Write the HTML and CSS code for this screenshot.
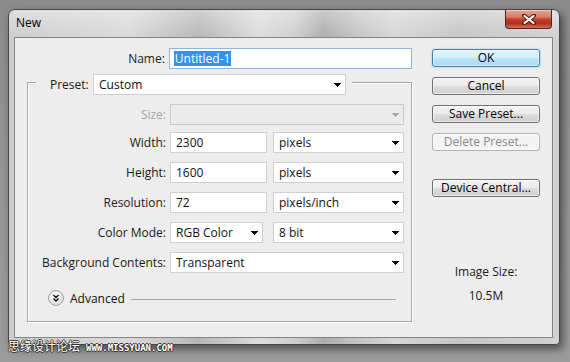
FILE: index.html
```html
<!DOCTYPE html>
<html>

<head>
    <meta charset="utf-8">
    <title>New</title>
    <link rel="stylesheet" href="styles.css">
</head>

<body>
    <div id="screen">
        <div class="window">
            <div class="titlebar">
                <span class="title">New</span>
                <div class="closebtn">
                    <svg width="14" height="11" viewBox="0 0 14 11">
                        <path d="M2 1.5L12 9.5M12 1.5L2 9.5" stroke="#5a1a10" stroke-width="4" stroke-linecap="round" />
                        <path d="M2.5 2L11.5 9M11.5 2L2.5 9" stroke="#fff" stroke-width="2.2" stroke-linecap="round" />
                    </svg>
                </div>
            </div>
            <div class="client">
                <div class="form">
                    <div class="row namerow">
                        <span class="lbl">Name:</span>
                        <div class="field name"><span class="sel">Untitled-1</span></div>
                    </div>

                    <div class="group">
                        <div class="grouphead">
                            <span class="headlbl">Preset:</span>
                            <div class="field drop preset">
                                <span>Custom</span>
                                <svg class="arrow" width="7" height="4"><rect x="0" y="0" width="7" height="1"/><rect x="1" y="1" width="5" height="1"/><rect x="2" y="2" width="3" height="1"/><rect x="3" y="3" width="1" height="1"/></svg>
                            </div>
                        </div>

                        <div class="rows">
                            <div class="row sizerow">
                                <span class="lbl dim">Size:</span>
                                <div class="field drop wide off">
                                    <span></span>
                                    <svg class="arrow" width="7" height="4"><rect x="0" y="0" width="7" height="1"/><rect x="1" y="1" width="5" height="1"/><rect x="2" y="2" width="3" height="1"/><rect x="3" y="3" width="1" height="1"/></svg>
                                </div>
                            </div>
                            <div class="row">
                                <span class="lbl">Width:</span>
                                <div class="field num">2300</div>
                                <div class="field drop unit">
                                    <span>pixels</span>
                                    <svg class="arrow" width="7" height="4"><rect x="0" y="0" width="7" height="1"/><rect x="1" y="1" width="5" height="1"/><rect x="2" y="2" width="3" height="1"/><rect x="3" y="3" width="1" height="1"/></svg>
                                </div>
                            </div>
                            <div class="row">
                                <span class="lbl">Height:</span>
                                <div class="field num">1600</div>
                                <div class="field drop unit">
                                    <span>pixels</span>
                                    <svg class="arrow" width="7" height="4"><rect x="0" y="0" width="7" height="1"/><rect x="1" y="1" width="5" height="1"/><rect x="2" y="2" width="3" height="1"/><rect x="3" y="3" width="1" height="1"/></svg>
                                </div>
                            </div>
                            <div class="row">
                                <span class="lbl">Resolution:</span>
                                <div class="field num">72</div>
                                <div class="field drop unit">
                                    <span>pixels/inch</span>
                                    <svg class="arrow" width="7" height="4"><rect x="0" y="0" width="7" height="1"/><rect x="1" y="1" width="5" height="1"/><rect x="2" y="2" width="3" height="1"/><rect x="3" y="3" width="1" height="1"/></svg>
                                </div>
                            </div>
                            <div class="row">
                                <span class="lbl">Color Mode:</span>
                                <div class="field drop mode">
                                    <span>RGB Color</span>
                                    <svg class="arrow" width="7" height="4"><rect x="0" y="0" width="7" height="1"/><rect x="1" y="1" width="5" height="1"/><rect x="2" y="2" width="3" height="1"/><rect x="3" y="3" width="1" height="1"/></svg>
                                </div>
                                <div class="field drop unit">
                                    <span>8 bit</span>
                                    <svg class="arrow" width="7" height="4"><rect x="0" y="0" width="7" height="1"/><rect x="1" y="1" width="5" height="1"/><rect x="2" y="2" width="3" height="1"/><rect x="3" y="3" width="1" height="1"/></svg>
                                </div>
                            </div>
                            <div class="row">
                                <span class="lbl">Background Contents:</span>
                                <div class="field drop wide">
                                    <span>Transparent</span>
                                    <svg class="arrow" width="7" height="4"><rect x="0" y="0" width="7" height="1"/><rect x="1" y="1" width="5" height="1"/><rect x="2" y="2" width="3" height="1"/><rect x="3" y="3" width="1" height="1"/></svg>
                                </div>
                            </div>
                        </div>

                        <div class="advanced">
                            <svg class="advicon" width="16" height="16" viewBox="0 0 16 16">
                                <defs>
                                    <radialGradient id="ball" cx="0.4" cy="0.35" r="0.7">
                                        <stop offset="0" stop-color="#ffffff" />
                                        <stop offset="1" stop-color="#d6d6d6" />
                                    </radialGradient>
                                </defs>
                                <circle cx="8" cy="8" r="7.5" fill="url(#ball)" stroke="#a4a4a4" />
                                <path d="M5.5 5L8 7.5L10.5 5M5.5 8.5L8 11L10.5 8.5" fill="none" stroke="#111" stroke-width="1.4" />
                            </svg>
                            <span class="advtext">Advanced</span>
                            <div class="advline"></div>
                        </div>
                    </div>
                </div>

                <div class="side">
                    <div class="btn primary">OK</div>
                    <div class="btn">Cancel</div>
                    <div class="btn">Save Preset...</div>
                    <div class="btn disabled">Delete Preset...</div>
                    <div class="btn device">Device Central...</div>
                    <div class="imgsize">
                        <p>Image Size:</p>
                        <p class="mb">10.5M</p>
                    </div>
                </div>
            </div>
        </div>
        <div class="watermark">
            <span class="cn">思缘设计论坛</span>
            <span class="url">WWW.MISSYUAN.COM</span>
        </div>
    </div>
</body>

</html>
```

FILE: styles.css
```css
* {
    box-sizing: border-box;
    margin: 0px;
    padding: 0px;
}

body {
    font-family: "Open Sans", "Noto Sans", sans-serif;
    font-size: 12px;
    color: #1a1a1a;
    background: #8f8f8f;
}

#screen {
    width: 570px;
    height: 362px;
    position: relative;
    overflow: hidden;
    padding: 9px 0px 0px 8px;
    background: linear-gradient(180deg, #8c8c8c 0%, #979797 60%, #9c9c9c 100%);
}

.window {
    width: 552px;
    height: 336px;
    border: 1px solid #474747;
    border-radius: 7px 7px 4px 4px;
    padding: 0px 6px 6px 5px;
    box-shadow: 3px 4px 8px rgba(0, 0, 0, 0.5);
    background:
        linear-gradient(180deg, rgba(255, 255, 255, 0.35) 0px, rgba(255, 255, 255, 0) 28px),
        linear-gradient(90deg, #cdcdcd 0px, #d9d9d9 120px, #b7b7b7 190px, #c6c6c6 215px, #dcdcdc 250px, #cfcfcf 285px, #adadad 315px, #c2c2c2 345px, #d6d6d6 385px, #c6c6c6 450px, #d2d2d2 552px);
}

.titlebar {
    height: 27px;
    display: flex;
    justify-content: space-between;
}

.title {
    margin-top: 5px;
    padding-left: 2px;
    line-height: 16px;
    color: #000;
}

.closebtn {
    width: 47px;
    height: 19px;
    margin-right: 1px;
    border: 1px solid #4d2620;
    border-top: none;
    border-radius: 0px 0px 4px 4px;
    display: flex;
    justify-content: center;
    align-items: center;
    background: linear-gradient(180deg, #e3a699 0%, #d77b68 40%, #c2432c 50%, #b3301c 75%, #d0705a 100%);
    box-shadow: inset 0px 1px 0px rgba(255, 255, 255, 0.4);
}

.client {
    height: 301px;
    border: 1px solid #858585;
    background: #ededed;
    display: flex;
}

.form {
    width: 397px;
}

.row {
    display: flex;
    align-items: center;
    height: 21px;
}

.lbl {
    width: 151px;
    margin-right: 4px;
    text-align: right;
    white-space: nowrap;
}

.dim {
    color: #a3a3a3;
}

.namerow {
    margin-top: 10px;
}

.field {
    height: 21px;
    border: 1px solid #cfcfcf;
    background: #fff;
    padding: 0px 5px;
    line-height: 19px;
    color: #111;
    white-space: nowrap;
}

.drop {
    display: flex;
    align-items: center;
    justify-content: space-between;
    padding-right: 4px;
}

.arrow {
    fill: #000;
    flex: none;
}

.name {
    width: 245px;
    border-color: #8fb6dc;
    padding-left: 4px;
    display: flex;
    align-items: center;
}

.sel {
    background: #3591ea;
    color: #fff;
    line-height: 15px;
    padding: 0px 1px;
}

.group {
    margin: 13px 0px 0px 12px;
    width: 385px;
    border: 1px solid #a5a5a5;
    box-shadow: inset 1px 1px 0px #fff, 1px 1px 0px #fff;
    padding-bottom: 15px;
}

.grouphead {
    margin: -9px 0px 0px 8px;
    padding: 0px 6px 0px 14px;
    background: #ededed;
    display: flex;
    width: fit-content;
}

.headlbl {
    width: 43px;
    line-height: 21px;
}

.preset {
    width: 253px;
}

.rows {
    margin-top: 9px;
    padding-right: 7px;
    display: flex;
    flex-direction: column;
    gap: 9px;
}

.rows .lbl {
    width: 138px;
}

.sizerow {
    margin-bottom: -2px;
}

.wide {
    flex: 1;
}

.off {
    background: #ebebeb;
    border-color: #c9c9c9;
}

.off .arrow {
    fill: #a8a8a8;
}

.num {
    width: 97px;
}

.mode {
    width: 93px;
}

.unit {
    width: 131px;
    margin-left: auto;
}

.advanced {
    margin-top: 17px;
    height: 16px;
    display: flex;
    align-items: center;
}

.advicon {
    margin-left: 20px;
    flex: none;
}

.advtext {
    margin-left: 6px;
    color: #111;
}

.advline {
    flex: 1;
    margin: 2px 15px 0px 6px;
    border-top: 1px solid #a8a8a8;
}

.side {
    width: 108px;
    margin: 11px 0px 0px 20px;
    display: flex;
    flex-direction: column;
    gap: 10px;
}

.btn {
    height: 18px;
    border: 1px solid #707070;
    border-radius: 3px;
    text-align: center;
    line-height: 16px;
    color: #000;
    background: linear-gradient(180deg, #f3f3f3 0%, #ebebeb 48%, #dcdcdc 52%, #cfcfcf 100%);
    box-shadow: inset 0px 0px 0px 1px rgba(255, 255, 255, 0.6);
}

.primary {
    border-color: #3c7fb1;
    background: linear-gradient(180deg, #e6f4fc 0%, #d6eefb 48%, #bde4f8 52%, #a9d9f2 100%);
    box-shadow: inset 0px 0px 0px 1px rgba(255, 255, 255, 0.5), 0px 0px 2px rgba(60, 140, 210, 0.5);
}

.disabled {
    border-color: #adb2b5;
    background: #f4f4f4;
    color: #8a8a8a;
}

.device {
    margin-top: 18px;
}

.imgsize {
    margin-top: 57px;
    text-align: center;
    line-height: 16px;
}

.mb {
    margin-top: 8px;
}

.watermark {
    position: absolute;
    left: 8px;
    top: 338px;
    display: flex;
    align-items: center;
    gap: 6px;
    color: #fff;
    text-shadow: 1px 0px 0px #333, -1px 0px 0px #333, 0px 1px 0px #333, 0px -1px 0px #333;
}

.cn {
    font-family: "Noto Sans CJK SC", sans-serif;
    font-size: 12px;
    line-height: 16px;
}

.url {
    font-family: "DejaVu Sans Mono", monospace;
    font-weight: bold;
    font-size: 9px;
    line-height: 12px;
    margin-top: 3px;
}
```
